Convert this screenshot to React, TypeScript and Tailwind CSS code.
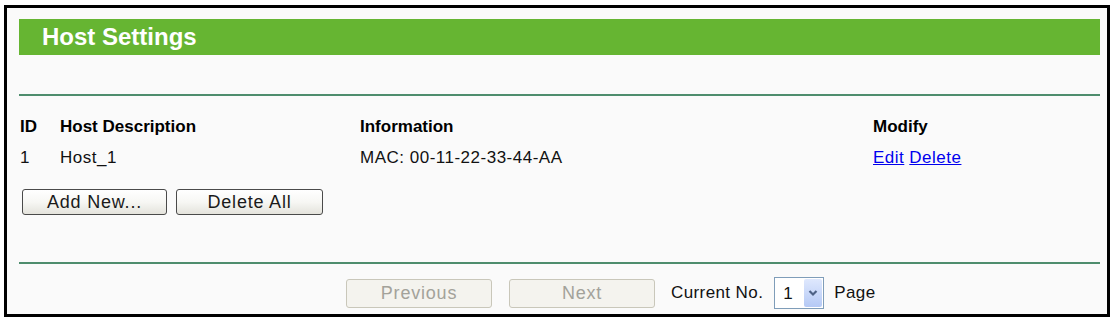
const font = "font-['Liberation_Sans',Arial,sans-serif]";

const hosts = [{ id: '1', name: 'Host_1', info: 'MAC: 00-11-22-33-44-AA' }];

function XpButton({ label, width }: { label: string; width: string }) {
  return (
    <button
      className={`${width} h-[26px] rounded-[3px] border border-[#4a4a4a] bg-gradient-to-b from-white via-[#f7f7f4] to-[#e4e3dc] text-[18px] tracking-[0.8px] leading-none text-[#1a1a1a] flex items-center justify-center`}
    >
      {label}
    </button>
  );
}

function DisabledButton({ label }: { label: string }) {
  return (
    <button className="w-[146px] h-[29px] rounded-[3px] border border-[#c9c7ba] bg-[#f4f3ee] text-[18px] tracking-[0.8px] leading-none text-[#a3a29a] flex items-center justify-center">
      {label}
    </button>
  );
}

export default function App() {
  return (
    <div className={`${font} bg-white w-[1112px] h-[321px] pt-[5px] pl-[4px]`}>
      <div className="w-[1106px] h-[312px] border-[3px] border-black bg-[#fafafa] pl-[12px] pr-[7px] pt-[11px]">
        {/* Title bar */}
        <div className="h-[36px] bg-[#66b532] flex items-center pl-[23px]">
          <h1 className="text-[24px] font-bold text-white leading-none">Host Settings</h1>
        </div>

        <div className="mt-[39px] h-[2px] bg-[#4e8d6d]" />

        {/* Table */}
        <div className="mt-[15px] text-[17px] text-black">
          <div className="h-[31px] flex items-center font-bold">
            <span className="w-[41px] pl-[1px]">ID</span>
            <span className="w-[300px]">Host Description</span>
            <span className="w-[513px]">Information</span>
            <span>Modify</span>
          </div>
          {hosts.map((h) => (
            <div key={h.id} className="h-[31px] flex items-center tracking-[0.5px] text-[#111]">
              <span className="w-[41px] pl-[1px]">{h.id}</span>
              <span className="w-[300px]">{h.name}</span>
              <span className="w-[513px]">{h.info}</span>
              <span className="flex gap-[5px] text-[#0000ee]">
                <a href="#" className="underline">Edit</a>
                <a href="#" className="underline">Delete</a>
              </span>
            </div>
          ))}
        </div>

        <div className="mt-[16px] flex gap-[9px] pl-[3px]">
          <XpButton label="Add New..." width="w-[145px]" />
          <XpButton label="Delete All" width="w-[147px]" />
        </div>

        <div className="mt-[47px] h-[2px] bg-[#4e8d6d]" />

        {/* Paging */}
        <div className="mt-[13px] h-[32px] flex items-center pl-[327px] text-[17px] tracking-[0.4px] text-[#111]">
          <DisabledButton label="Previous" />
          <div className="ml-[17px]">
            <DisabledButton label="Next" />
          </div>
          <span className="ml-[16px]">Current No.</span>
          <div className="ml-[11px] w-[50px] h-[32px] border border-[#7f9db9] bg-white flex items-center justify-between p-[1px]">
            <span className="pl-[7px] leading-none">1</span>
            <span className="w-[18px] h-full rounded-[2px] bg-gradient-to-b from-[#dfe8fd] to-[#b5c9f5] flex items-center justify-center">
              <svg width="10" height="8" viewBox="0 0 10 8">
                <path d="M1.5 2 L5 5.5 L8.5 2" fill="none" stroke="#4d6185" strokeWidth="2.2" />
              </svg>
            </span>
          </div>
          <span className="ml-[10px]">Page</span>
        </div>
      </div>
    </div>
  );
}
